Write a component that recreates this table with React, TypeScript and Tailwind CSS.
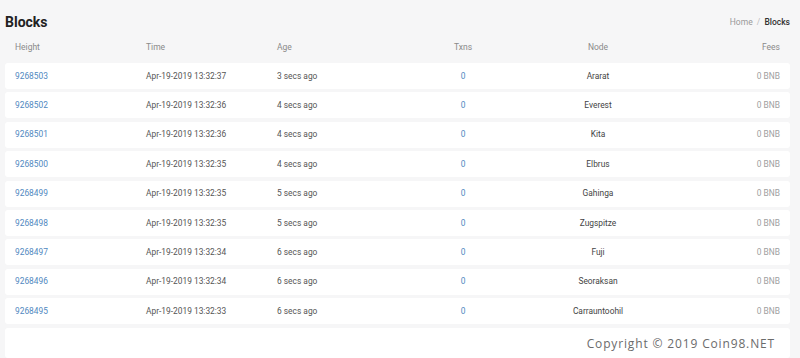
const blocks = [
  { height: "9268503", time: "Apr-19-2019 13:32:37", age: "3 secs ago", node: "Ararat" },
  { height: "9268502", time: "Apr-19-2019 13:32:36", age: "4 secs ago", node: "Everest" },
  { height: "9268501", time: "Apr-19-2019 13:32:36", age: "4 secs ago", node: "Kita" },
  { height: "9268500", time: "Apr-19-2019 13:32:35", age: "4 secs ago", node: "Elbrus" },
  { height: "9268499", time: "Apr-19-2019 13:32:35", age: "5 secs ago", node: "Gahinga" },
  { height: "9268498", time: "Apr-19-2019 13:32:35", age: "5 secs ago", node: "Zugspitze" },
  { height: "9268497", time: "Apr-19-2019 13:32:34", age: "6 secs ago", node: "Fuji" },
  { height: "9268496", time: "Apr-19-2019 13:32:34", age: "6 secs ago", node: "Seoraksan" },
  { height: "9268495", time: "Apr-19-2019 13:32:33", age: "6 secs ago", node: "Carrauntoohil" },
];

const cols = "grid grid-cols-[131px_131px_120px_132px_138px_113px] items-center px-[10px]";

export default function App() {
  return (
    <div className="w-[800px] h-[358px] overflow-hidden bg-[#f6f6f7] px-[5px] pr-[10px] font-['Roboto',sans-serif]">
      {/* Page title + breadcrumb */}
      <div className="flex items-center justify-between h-[40px] pt-[4px]">
        <h1 className="text-[14px] font-bold text-[#222]">Blocks</h1>
        <div className="text-[8.5px] text-[#999]">
          Home <span className="mx-[2px] text-[#bbb]">/</span>{" "}
          <span className="font-medium text-[#333]">Blocks</span>
        </div>
      </div>

      {/* Column headers */}
      <div className={`${cols} h-[14px] text-[8.5px] text-[#8a8a8a]`}>
        <span>Height</span>
        <span>Time</span>
        <span>Age</span>
        <span className="text-center">Txns</span>
        <span className="text-center">Node</span>
        <span className="text-right">Fees</span>
      </div>

      {/* Rows */}
      <div className="flex flex-col gap-[3.4px] mt-[9px]">
        {blocks.map((b) => (
          <div
            key={b.height}
            className={`${cols} h-[26px] bg-white rounded-[3px] text-[8.4px]`}
          >
            <span className="text-[#5088c0]">{b.height}</span>
            <span className="text-[#555]">{b.time}</span>
            <span className="text-[#555]">{b.age}</span>
            <span className="text-center text-[#5088c0]">0</span>
            <span className="text-center text-[#444]">{b.node}</span>
            <span className="text-right text-[#a0a0a0]">0 BNB</span>
          </div>
        ))}
        <div className="h-[30px] bg-white rounded-[3px] flex items-center justify-end pr-[15px] pt-[2px]">
          <span className="font-['Open_Sans',sans-serif] text-[12px] tracking-[0.85px] text-[#6b6b6b]">
            Copyright © 2019 Coin98.NET
          </span>
        </div>
      </div>
    </div>
  );
}
